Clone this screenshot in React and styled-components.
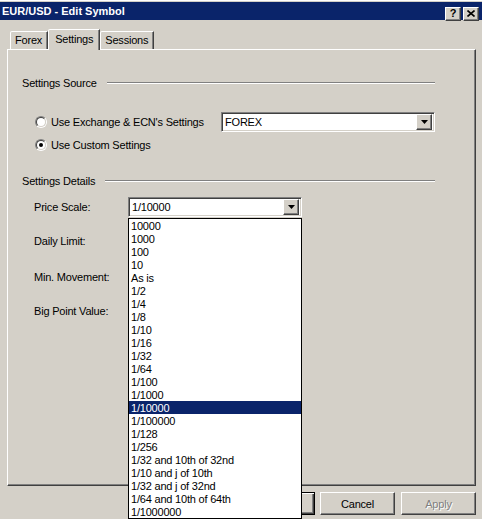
import React from "react";
import styled, { createGlobalStyle, css } from "styled-components";

const GlobalStyle = createGlobalStyle`
  body {
    margin: 0;
    background: #d4d0c8;
    font-family: "Liberation Sans", Arial, sans-serif;
    font-size: 11px;
    letter-spacing: -0.2px;
  }
  * { box-sizing: border-box; }
`;

const raised = css`
  border: 1px solid;
  border-color: #ffffff #404040 #404040 #ffffff;
  box-shadow: inset -1px -1px #808080;
  background: #d4d0c8;
`;

const sunken = css`
  border: 1px solid;
  border-color: #808080 #ffffff #ffffff #808080;
  box-shadow: inset 1px 1px #404040, inset -1px -1px #d4d0c8;
`;

const priceScales = [
  "10000", "1000", "100", "10", "As is", "1/2", "1/4", "1/8", "1/10", "1/16",
  "1/32", "1/64", "1/100", "1/1000", "1/10000", "1/100000", "1/128", "1/256",
  "1/32 and 10th of 32nd", "1/10 and j of 10th", "1/32 and j of 32nd",
  "1/64 and 10th of 64th", "1/1000000",
];

function ArrowButton() {
  return (
    <DropButton>
      <svg width="7" height="4" viewBox="0 0 7 4">
        <path d="M0 0h7L3.5 4z" fill="#000" />
      </svg>
    </DropButton>
  );
}

function Radio({ checked, label }) {
  return (
    <RadioRow>
      <RadioOuter>
        <RadioInner>{checked && <RadioDot />}</RadioInner>
      </RadioOuter>
      <span>{label}</span>
    </RadioRow>
  );
}

function App() {
  return (
    <>
      <GlobalStyle />
      <Window>
        <TitleBar>
          <Title>EUR/USD - Edit Symbol</Title>
          <CaptionButtons>
            <CaptionButton>?</CaptionButton>
            <CaptionButton>
              <svg width="8" height="7" viewBox="0 0 8 7">
                <path d="M0.5 0.5l7 6M7.5 0.5l-7 6" stroke="#000" strokeWidth="1.6" />
              </svg>
            </CaptionButton>
          </CaptionButtons>
        </TitleBar>

        <TabStrip>
          <Tab>Forex</Tab>
          <Tab $active>Settings</Tab>
          <Tab>Sessions</Tab>
        </TabStrip>

        <Panel>
          <GroupHeader>
            <span>Settings Source</span>
            <Etched />
          </GroupHeader>

          <SourceRow>
            <Radio label="Use Exchange & ECN's Settings" />
            <Combo $width={214} $push>
              <ComboText>FOREX</ComboText>
              <ArrowButton />
            </Combo>
          </SourceRow>
          <CustomRow>
            <Radio checked label="Use Custom Settings" />
          </CustomRow>

          <GroupHeader $top={23}>
            <span>Settings Details</span>
            <Etched />
          </GroupHeader>

          <FieldRow $top={10}>
            <FieldLabel>Price Scale:</FieldLabel>
            <Combo $width={174}>
              <ComboText>1/10000</ComboText>
              <ArrowButton />
              <DropList>
                {priceScales.map((s) => (
                  <DropItem key={s} $selected={s === "1/10000"}>
                    {s}
                  </DropItem>
                ))}
              </DropList>
            </Combo>
          </FieldRow>
          <FieldRow $top={14}>
            <FieldLabel>Daily Limit:</FieldLabel>
          </FieldRow>
          <FieldRow $top={16}>
            <FieldLabel>Min. Movement:</FieldLabel>
          </FieldRow>
          <FieldRow $top={14}>
            <FieldLabel>Big Point Value:</FieldLabel>
          </FieldRow>
        </Panel>

        <ButtonBar>
          <DialogButton $default>OK</DialogButton>
          <DialogButton>Cancel</DialogButton>
          <DialogButton $disabled>Apply</DialogButton>
        </ButtonBar>
      </Window>
    </>
  );
}

const Window = styled.div`
  width: 482px;
  height: 519px;
  overflow: hidden;
  background: #d4d0c8;
  padding-top: 2px;
  box-shadow: inset 0 1px #ffffff;
  color: #000;
`;

const TitleBar = styled.div`
  height: 18px;
  background: #0a246a;
  display: flex;
  align-items: center;
  justify-content: space-between;
  padding: 0 3px 0 2px;
`;

const Title = styled.span`
  color: #fff;
  font-weight: 700;
  font-size: 11px;
  letter-spacing: 0;
`;

const CaptionButtons = styled.div`
  display: flex;
  gap: 2px;
  margin-top: 5px;
`;

const CaptionButton = styled.div`
  ${raised};
  width: 16px;
  height: 14px;
  display: flex;
  align-items: center;
  justify-content: center;
  font-weight: 700;
  font-size: 11px;
  line-height: 1;
`;

const TabStrip = styled.div`
  display: flex;
  align-items: flex-end;
  height: 20px;
  margin: 9px 0 0 10px;
`;

const Tab = styled.div`
  height: ${(p) => (p.$active ? 21 : 18)}px;
  margin-bottom: ${(p) => (p.$active ? -1 : 0)}px;
  padding: ${(p) => (p.$active ? "3px 6px 0 6px" : "2px 5px 0 4px")};
  border: 1px solid;
  border-bottom: none;
  border-color: #ffffff #404040 transparent #ffffff;
  border-top-left-radius: 2px;
  box-shadow: inset -1px 0 #808080;
  background: #d4d0c8;
  position: relative;
  z-index: ${(p) => (p.$active ? 2 : 1)};
  line-height: 13px;
`;

const Panel = styled.div`
  width: 469px;
  height: 437px;
  margin-left: 7px;
  border: 1px solid;
  border-color: #ffffff #404040 #404040 #ffffff;
  box-shadow: inset -1px -1px #808080;
  padding: 26px 40px 0 14px;
  position: relative;
`;

const GroupHeader = styled.div`
  display: flex;
  align-items: center;
  height: 13px;
  margin-top: ${(p) => p.$top || 0}px;
  gap: 10px;
`;

const Etched = styled.div`
  flex: 1;
  height: 2px;
  border-top: 1px solid #808080;
  border-bottom: 1px solid #ffffff;
`;

const SourceRow = styled.div`
  display: flex;
  align-items: center;
  height: 20px;
  margin-top: 23px;
  padding-left: 13px;
`;

const CustomRow = styled.div`
  display: flex;
  align-items: center;
  height: 13px;
  margin-top: 6px;
  padding-left: 13px;
`;

const RadioRow = styled.label`
  display: flex;
  align-items: center;
  gap: 4px;
  white-space: nowrap;
`;

const RadioOuter = styled.span`
  width: 12px;
  height: 12px;
  border-radius: 50%;
  border: 1px solid;
  border-color: #808080 #ffffff #ffffff #808080;
  display: flex;
`;

const RadioInner = styled.span`
  flex: 1;
  border-radius: 50%;
  border: 1px solid;
  border-color: #404040 #d4d0c8 #d4d0c8 #404040;
  background: #fff;
  display: flex;
  align-items: center;
  justify-content: center;
`;

const RadioDot = styled.span`
  width: 4px;
  height: 4px;
  border-radius: 50%;
  background: #000;
`;

const FieldRow = styled.div`
  display: flex;
  align-items: center;
  height: 20px;
  margin-top: ${(p) => p.$top}px;
  padding-left: 12px;
`;

const FieldLabel = styled.span`
  width: 94px;
  white-space: nowrap;
`;

const Combo = styled.div`
  ${sunken};
  width: ${(p) => p.$width}px;
  height: 20px;
  margin-left: ${(p) => (p.$push ? "auto" : "0")};
  background: #fff;
  display: flex;
  align-items: center;
  padding: 2px;
  position: relative;
`;

const ComboText = styled.span`
  flex: 1;
  padding-left: 1px;
  line-height: 16px;
`;

const DropButton = styled.div`
  ${raised};
  width: 16px;
  height: 16px;
  display: flex;
  align-items: center;
  justify-content: center;
`;

const DropList = styled.div`
  position: absolute;
  top: 20px;
  left: -1px;
  width: 174px;
  border: 1px solid #000;
  background: #fff;
  z-index: 10;
`;

const DropItem = styled.div`
  height: 13px;
  line-height: 14px;
  padding-left: 2px;
  white-space: nowrap;
  background: ${(p) => (p.$selected ? "#0a246a" : "#fff")};
  color: ${(p) => (p.$selected ? "#fff" : "#000")};
`;

const ButtonBar = styled.div`
  display: flex;
  justify-content: flex-end;
  gap: 5px;
  margin-top: 6px;
  padding-right: 6px;
`;

const DialogButton = styled.div`
  ${raised};
  width: 75px;
  height: 23px;
  display: flex;
  align-items: center;
  justify-content: center;
  margin-left: ${(p) => (p.$disabled ? 1 : 0)}px;
  color: ${(p) => (p.$disabled ? "#808080" : "#000")};
  text-shadow: ${(p) => (p.$disabled ? "1px 1px #ffffff" : "none")};
  ${(p) =>
    p.$default &&
    css`
      border: 1px solid #000;
      box-shadow: inset 1px 1px #ffffff, inset -1px -1px #404040,
        inset -2px -2px #808080;
    `}
`;

export default App;
